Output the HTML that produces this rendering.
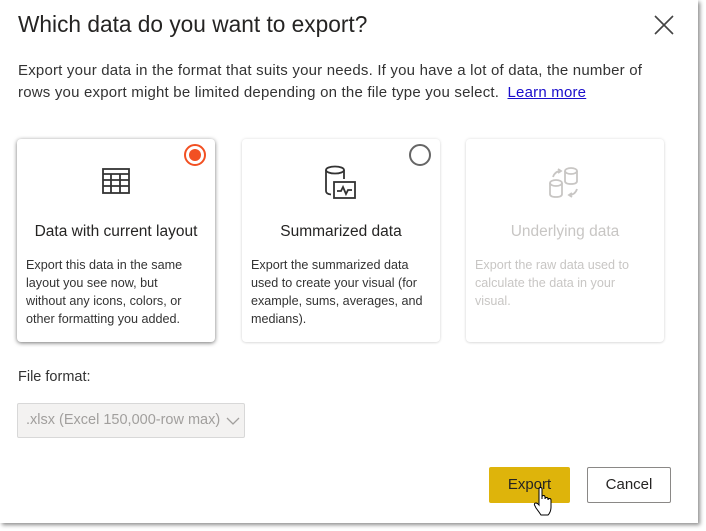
<!DOCTYPE html>
<html><head><style>
*{margin:0;padding:0;box-sizing:border-box}
body{width:706px;height:531px;background:#fff;font-family:"Liberation Sans",sans-serif;position:relative;overflow:hidden;color:#252423}
.dlg{position:absolute;left:0;top:0;width:698px;height:523px;background:#fff;box-shadow:2px 2px 4px rgba(0,0,0,.45)}
.title{position:absolute;left:18px;top:11px;font-size:22.7px;color:#252423}
.close{position:absolute;left:653px;top:14px}
.desc{position:absolute;left:18px;top:60px;width:652px;font-size:15px;line-height:22px;color:#333;letter-spacing:0.2px}
.desc a{color:#1a0dcc;text-decoration:underline;margin-left:4px}
.card{position:absolute;top:139px;width:198px;height:203px;border-radius:4px;background:#fff;box-shadow:0 0 3px rgba(0,0,0,.12),0 1px 2px rgba(0,0,0,.08)}
.card.sel{box-shadow:0 1px 4px rgba(0,0,0,.55)}
.card h3{position:absolute;top:84px;left:0;width:100%;text-align:center;font-size:15.5px;font-weight:normal;color:#252423}
.card p{position:absolute;left:9px;top:117px;width:176px;font-size:12.6px;line-height:18px;color:#333}
.card.dis h3,.card.dis p{color:#c8c6c4}
.icon{position:absolute;left:50%;top:26px;transform:translateX(-50%)}
.radio{position:absolute;right:9px;top:5px;width:22px;height:22px;border-radius:50%}
.lbl{position:absolute;left:18px;top:369px;font-size:14.5px;color:#333}
.sel-box{position:absolute;left:17px;top:403px;width:228px;height:35px;border:1px solid #d8d8d8;background:#f3f2f1;border-radius:2px;color:#a19f9d;font-size:14.5px;padding:8px 0 0 8px}
.btn{position:absolute;top:467px;height:36px;font-size:15px;text-align:center;line-height:36px;border-radius:2px}
</style></head><body>
<div class="dlg">
<div class="title">Which data do you want to export?</div>
<svg class="close" width="22" height="22" viewBox="0 0 22 22"><path d="M2 2L20 20M20 2L2 20" stroke="#444" stroke-width="1.6"/></svg>
<div class="desc">Export your data in the format that suits your needs. If you have a lot of data, the number of rows you export might be limited depending on the file type you select. <a>Learn more</a></div>

<div class="card sel" style="left:17px">
<div class="radio" style="border:2px solid #f25022"><div style="position:absolute;left:3px;top:3px;width:12px;height:12px;border-radius:50%;background:#f25022"></div></div>
<svg class="icon" width="30" height="28" viewBox="0 0 30 28" style="top:28px"><g fill="none" stroke="#333" stroke-width="1.8"><rect x="2" y="2" width="26" height="24"/><path d="M2 7H28M2 13H28M2 19H28M10 7V26M19 7V26"/></g></svg>
<h3>Data with current layout</h3>
<p style="width:166px">Export this data in the same layout you see now, but without any icons, colors, or other formatting you added.</p>
</div>

<div class="card" style="left:242px">
<div class="radio" style="border:2px solid #666"></div>
<svg class="icon" width="34" height="36" viewBox="0 0 34 36"><g fill="none" stroke="#333" stroke-width="1.8"><ellipse cx="11" cy="5" rx="9" ry="3.5"/><path d="M2 5V26Q2 29 7 29.5M20 5V14"/><rect x="10" y="17" width="21" height="16" fill="#fff"/><path d="M13 26H17L19 22L22 29L24 25H28"/></g></svg>
<h3>Summarized data</h3>
<p>Export the summarized data used to create your visual (for example, sums, averages, and medians).</p>
</div>

<div class="card dis" style="left:466px">
<svg class="icon" width="36" height="36" viewBox="0 0 36 36"><g fill="none" stroke="#c8c6c4" stroke-width="1.8"><ellipse cx="24" cy="6" rx="6" ry="3"/><path d="M18 6V16Q18 19 24 19Q30 19 30 16V6"/><ellipse cx="9" cy="18" rx="6" ry="3"/><path d="M3 18V29Q3 32 9 32Q15 32 15 29V18"/><path d="M6 12Q8 6 14 6M11 4L14 6L11 8M30 24Q28 30 22 30M25 28L22 30L25 32"/></g></svg>
<h3>Underlying data</h3>
<p>Export the raw data used to calculate the data in your visual.</p>
</div>

<div class="lbl">File format:</div>
<div class="sel-box">.xlsx (Excel 150,000-row max)<svg style="position:absolute;right:4px;top:13px" width="14" height="9" viewBox="0 0 14 9"><path d="M1 1L7 7L13 1" fill="none" stroke="#a19f9d" stroke-width="1.3"/></svg></div>

<div class="btn" style="left:489px;width:81px;background:#deb40b;color:#252423">Export</div>
<div class="btn" style="left:587px;width:84px;border:1px solid #8a8886;background:#fff;color:#252423;line-height:34px">Cancel</div>
<svg style="position:absolute;left:533px;top:487px" width="22" height="30" viewBox="0 0 22 30"><path d="M6 2Q6 0.5 7.5 0.5Q9 0.5 9 2V12L9 10Q9 8.5 10.5 8.5Q12 8.5 12 10V12Q12 10.5 13.5 10.5Q15 10.5 15 12V13Q15 11.5 16.5 11.5Q18 11.5 18 13V20Q18 25 15 28H8Q6 25 3 21L1.5 18Q1 16 3 16Q4.5 16 6 18Z" fill="#fff" stroke="#000" stroke-width="1"/></svg>
</div>
</body></html>
